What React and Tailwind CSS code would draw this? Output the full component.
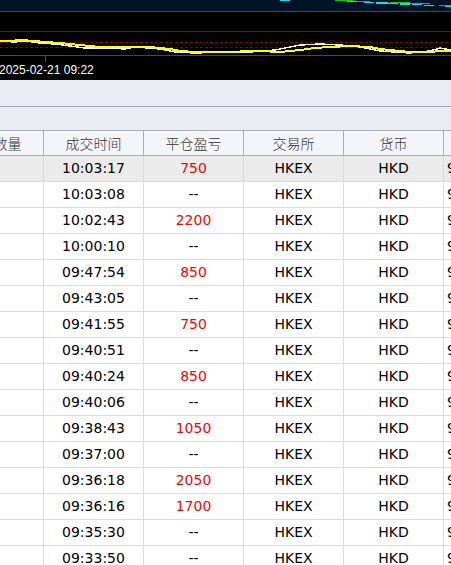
import React from "react";

const rows = [
  ["10:03:17", "750"],
  ["10:03:08", "--"],
  ["10:02:43", "2200"],
  ["10:00:10", "--"],
  ["09:47:54", "850"],
  ["09:43:05", "--"],
  ["09:41:55", "750"],
  ["09:40:51", "--"],
  ["09:40:24", "850"],
  ["09:40:06", "--"],
  ["09:38:43", "1050"],
  ["09:37:00", "--"],
  ["09:36:18", "2050"],
  ["09:36:16", "1700"],
  ["09:35:30", "--"],
  ["09:33:50", "--"],
];

const headers = ["成交数量", "成交时间", "平仓盈亏", "交易所", "货币"];

const yellow =
  "0,41 10,41 20,40 35,41 45,42 60,43 70,44 80,45 90,46 100,47 130,47 150,47 160,48 170,49 180,51 195,52 220,52 260,51 280,52 300,50 315,48 330,47 350,46 370,47 380,49 390,50 410,52 430,52 440,51 451,51";
const white =
  "0,41 15,42 25,41 40,43 55,44 70,46 85,48 110,48 125,49 135,47 160,49 175,52 195,53 225,52 250,52 275,50 290,47 300,45 320,44 340,45 360,47 380,51 410,53 430,51 440,48 445,49 451,50";

// 分时副图
const Chart = () => (
  <div className="h-[80px] bg-black overflow-hidden">
    <svg width="451" height="62" className="block" shapeRendering="crispEdges">
      <rect x="0" y="0" width="451" height="11" fill="#011327" />
      <rect x="280" y="0" width="10" height="1" fill="#00e5ff" />
      <rect x="335" y="0" width="18" height="1" fill="#00d000" />
      <rect x="352" y="1" width="18" height="1" fill="#00d000" />
      <rect x="347" y="1" width="10" height="1" fill="#00e5ff" />
      <rect x="364" y="2" width="10" height="1" fill="#00e5ff" />
      <rect x="376" y="2" width="12" height="2" fill="#00e5ff" />
      <rect x="390" y="2" width="20" height="1" fill="#00d000" />
      <rect x="388" y="3" width="10" height="1" fill="#00e5ff" />
      <rect x="400" y="3" width="10" height="2" fill="#00e5ff" />
      <rect x="410" y="3" width="20" height="1" fill="#00d000" />
      <rect x="412" y="4" width="10" height="1" fill="#00e5ff" />
      <rect x="424" y="5" width="10" height="1" fill="#00e5ff" />
      <rect x="439" y="5" width="12" height="1" fill="#00d000" />
      <rect x="445" y="6" width="6" height="1" fill="#00e5ff" />
      <rect x="0" y="11" width="451" height="1" fill="#b01c1c" />
      <rect x="0" y="31" width="451" height="1" fill="#7a1010" />
      <line x1="0" y1="42.5" x2="451" y2="42.5" stroke="#8b0000" strokeDasharray="3 2" />
      <line x1="0" y1="47.5" x2="451" y2="47.5" stroke="#8b0000" strokeDasharray="3 2" />
      <rect x="0" y="55" width="451" height="1" fill="#b01c1c" />
      <rect x="45" y="56" width="1" height="6" fill="#b01c1c" />
      <polyline points={white} fill="none" stroke="#ffffff" strokeWidth="1.5" />
      <polyline points={yellow} fill="none" stroke="#ffff00" strokeWidth="2" />
    </svg>
    <div className="-ml-[1px] text-[12px] leading-[16px] text-white font-['Liberation_Sans',sans-serif]">
      2025-02-21 09:22
    </div>
  </div>
);

export default function App() {
  return (
    <div className="w-[451px] h-[565px] overflow-hidden bg-white">
      <Chart />
      <div className="h-[27px] bg-[#e9ecf0] border-b border-[#a8adb5]" />
      <div className="h-[23px] bg-[#e9ecf0]" />

      <div className="-ml-[56px] w-[700px]">
        <div className="flex h-[26px] bg-[#f4f5f8] border-y border-[#a9aeb5]">
          {headers.map((h) => (
            <div
              key={h}
              className="w-[100px] shrink-0 border-r border-[#a9aeb5] flex items-center justify-center text-[14px] text-[#333] font-['Noto_Sans_CJK_SC',sans-serif] font-light"
            >
              {h}
            </div>
          ))}
          <div className="w-[100px] shrink-0 border-r border-[#a9aeb5]" />
        </div>

        {rows.map(([t, pl], i) => (
          <div
            key={t}
            className={`flex h-[26px] border-b border-[#dcdcdc] text-[14px] text-black font-['DejaVu_Sans',sans-serif] ${
              i === 0 ? "bg-[#ebebec]" : "bg-white"
            }`}
          >
            <div className="w-[100px] shrink-0 border-r border-[#dcdcdc]" />
            <div className="w-[100px] shrink-0 border-r border-[#dcdcdc] flex items-center justify-center">{t}</div>
            <div
              className={`w-[100px] shrink-0 border-r border-[#dcdcdc] flex items-center justify-center ${
                pl === "--" ? "text-black" : "text-[#ff0000]"
              }`}
            >
              {pl}
            </div>
            <div className="w-[100px] shrink-0 border-r border-[#dcdcdc] flex items-center justify-center">HKEX</div>
            <div className="w-[100px] shrink-0 border-r border-[#dcdcdc] flex items-center justify-center">HKD</div>
            <div className="w-[100px] shrink-0 border-r border-[#dcdcdc] flex items-center pl-[3px]">9.85</div>
          </div>
        ))}
      </div>
    </div>
  );
}
